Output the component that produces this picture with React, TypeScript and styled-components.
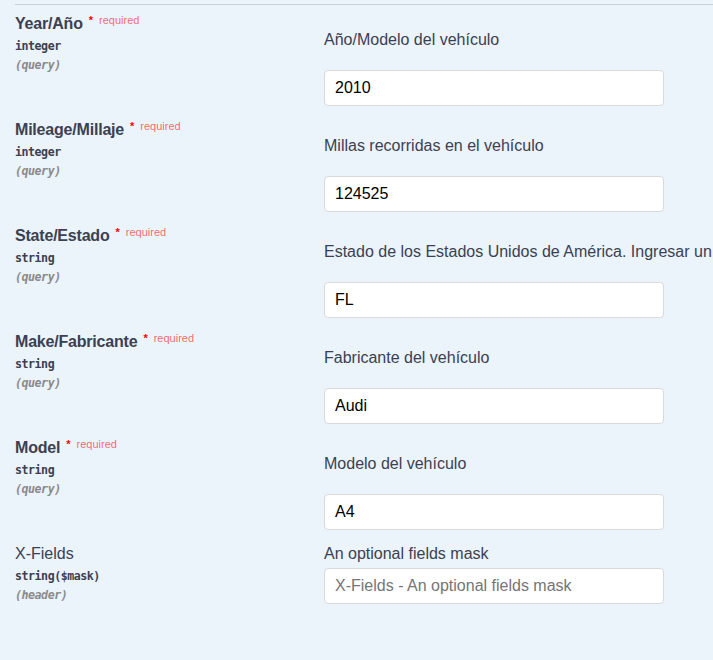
import styled, { createGlobalStyle } from 'styled-components';

const GlobalStyle = createGlobalStyle`
  html, body {
    margin: 0;
    padding: 0;
    background: #ebf3fb;
    overflow: hidden;
  }
`;

interface Param {
  name: string;
  type: string;
  location: string;
  required: boolean;
  description: string;
  markdown: boolean;
  value?: string;
  placeholder?: string;
}

const params: Param[] = [
  { name: 'Year/Año', type: 'integer', location: 'query', required: true, description: 'Año/Modelo del vehículo', markdown: true, value: '2010' },
  { name: 'Mileage/Millaje', type: 'integer', location: 'query', required: true, description: 'Millas recorridas en el vehículo', markdown: true, value: '124525' },
  { name: 'State/Estado', type: 'string', location: 'query', required: true, description: 'Estado de los Estados Unidos de América. Ingresar un', markdown: true, value: 'FL' },
  { name: 'Make/Fabricante', type: 'string', location: 'query', required: true, description: 'Fabricante del vehículo', markdown: true, value: 'Audi' },
  { name: 'Model', type: 'string', location: 'query', required: true, description: 'Modelo del vehículo', markdown: true, value: 'A4' },
  { name: 'X-Fields', type: 'string($mask)', location: 'header', required: false, description: 'An optional fields mask', markdown: false, placeholder: 'X-Fields - An optional fields mask' },
];

const Page = styled.div`
  min-height: 100vh;
  padding: 4px 0 0 15px;
  background: #ebf3fb;
  color: #3b4151;
`;

const Table = styled.div`
  border-top: 1px solid rgba(59, 65, 81, 0.2);
`;

const Row = styled.div`
  display: grid;
  grid-template-columns: 309px 1fr;
  padding: 9px 0 5px;
`;

const NameCol = styled.div`
  display: flex;
  flex-direction: column;
  align-items: flex-start;
  padding-top: 1px;
`;

const Name = styled.div<{ $required: boolean }>`
  font-family: 'Liberation Sans', Arial, sans-serif;
  font-size: 16px;
  font-weight: ${(p) => (p.$required ? 700 : 400)};
  letter-spacing: ${(p) => (p.$required ? '-0.2px' : '0')};
  line-height: 18px;
  white-space: nowrap;
`;

// superscript marker, kept out of the line box so the name doesn't shift
const Star = styled.span`
  font-size: 11px;
  line-height: 0;
  letter-spacing: 0;
  color: #ff0000;
  vertical-align: 5px;
  margin-left: 6px;
`;

const RequiredLabel = styled.span`
  font-weight: 400;
  color: rgba(255, 0, 0, 0.6);
  padding-left: 6px;
`;

const Mono = styled.div<{ $muted?: boolean }>`
  font-family: 'DejaVu Sans Mono', 'Liberation Mono', monospace;
  font-size: 11.6px;
  letter-spacing: -0.45px;
  line-height: 13px;
  font-weight: 700;
  font-style: ${(p) => (p.$muted ? 'italic' : 'normal')};
  color: ${(p) => (p.$muted ? '#8a8a8a' : '#3b4151')};
  margin-top: ${(p) => (p.$muted ? '6px' : '7px')};
`;

const DescCol = styled.div`
  display: flex;
  flex-direction: column;
  align-items: flex-start;
  min-width: 0;
`;

const Description = styled.div<{ $markdown: boolean }>`
  font-family: 'Liberation Sans', Arial, sans-serif;
  font-size: 16px;
  line-height: 19px;
  white-space: nowrap;
  margin: ${(p) => (p.$markdown ? '16px 0' : '0')};
`;

const Input = styled.input`
  box-sizing: border-box;
  width: 340px;
  height: 36px;
  margin-top: 5px;
  padding: 0 10px;
  border: 1px solid #d9d9d9;
  border-radius: 4px;
  background: #fff;
  font-family: 'Liberation Sans', Arial, sans-serif;
  font-size: 16px;
  color: #000;
  outline: none;

  &::placeholder {
    color: #757575;
  }
`;

export default function App() {
  return (
    <>
      <GlobalStyle />
      <Page>
        <Table>
          {params.map((p) => (
            <Row key={p.name}>
              <NameCol>
                <Name $required={p.required}>
                  {p.name}
                  {p.required && (
                    <Star>
                      *<RequiredLabel>required</RequiredLabel>
                    </Star>
                  )}
                </Name>
                <Mono>{p.type}</Mono>
                <Mono $muted>({p.location})</Mono>
              </NameCol>
              <DescCol>
                <Description $markdown={p.markdown}>{p.description}</Description>
                <Input defaultValue={p.value} placeholder={p.placeholder} />
              </DescCol>
            </Row>
          ))}
        </Table>
      </Page>
    </>
  );
}
